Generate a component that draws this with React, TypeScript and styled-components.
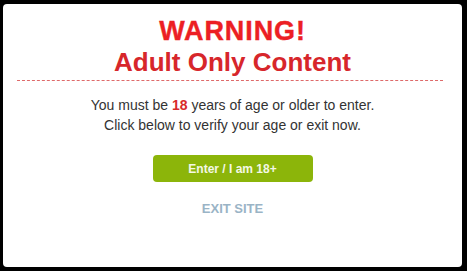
import styled, { createGlobalStyle } from 'styled-components';

const GlobalStyle = createGlobalStyle`
  html, body {
    margin: 0;
    padding: 0;
    background: #000;
  }
  body {
    font-family: "Liberation Sans", Arial, sans-serif;
  }
`;

const AgeGate = () => {
  return (
    <Frame>
      <Card>
        <Heading>
          <Warning>WARNING!</Warning>
          <Subtitle>Adult Only Content</Subtitle>
        </Heading>
        <Divider />
        <Message>
          You must be <Age>18</Age> years of age or older to enter.
          <br />
          Click below to verify your age or exit now.
        </Message>
        <EnterButton type="button">Enter / I am 18+</EnterButton>
        <ExitLink href="#">EXIT SITE</ExitLink>
      </Card>
    </Frame>
  );
};

export default function App() {
  return (
    <>
      <GlobalStyle />
      <AgeGate />
    </>
  );
}

const Frame = styled.div`
  width: 467px;
  height: 271px;
  box-sizing: border-box;
  padding: 4px 5px 4px 3px;
  background: #000;
  display: flex;
`;

const Card = styled.div`
  flex: 1;
  background: #fff;
  border-radius: 4px;
  display: flex;
  flex-direction: column;
  align-items: center;
  padding: 12px 14px 0 14px;
`;

const Heading = styled.div`
  display: flex;
  flex-direction: column;
  align-items: center;
  font-weight: bold;
`;

const Warning = styled.div`
  font-size: 27px;
  line-height: 31px;
  letter-spacing: 0.9px;
  color: #ec1f24;
  -webkit-text-stroke: 0.4px #ec1f24;
`;

const Subtitle = styled.div`
  font-size: 26px;
  line-height: 31px;
  color: #d7262b;
`;

const Divider = styled.div`
  align-self: stretch;
  height: 0;
  border-top: 1px dashed #de6a6a;
  margin: 2px 5px 0 0;
`;

const Message = styled.p`
  margin: 14px 0 0;
  font-size: 14px;
  line-height: 20px;
  color: #333;
  text-align: center;
`;

const Age = styled.b`
  color: #d82a2a;
`;

const EnterButton = styled.button`
  margin-top: 20px;
  width: 160px;
  height: 27px;
  border: none;
  border-radius: 4px;
  background: #8cb50a;
  color: #f4f8e6;
  font-family: "Liberation Sans", Arial, sans-serif;
  font-size: 12px;
  font-weight: bold;
  cursor: pointer;
`;

const ExitLink = styled.a`
  margin-top: 19px;
  font-size: 13px;
  font-weight: bold;
  color: #9ab4c6;
  text-decoration: none;
`;
